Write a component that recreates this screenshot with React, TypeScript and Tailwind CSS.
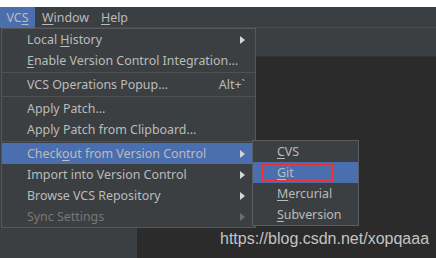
import React from "react";

type Item =
  | { kind: "sep" }
  | {
      kind: "item";
      label: string;
      mnemonic?: number;
      arrow?: boolean;
      shortcut?: string;
      active?: boolean;
      disabled?: boolean;
    };

const vcsItems: Item[] = [
  { kind: "item", label: "Local History", mnemonic: 6, arrow: true },
  { kind: "item", label: "Enable Version Control Integration...", mnemonic: 0 },
  { kind: "sep" },
  { kind: "item", label: "VCS Operations Popup...", shortcut: "Alt+`" },
  { kind: "sep" },
  { kind: "item", label: "Apply Patch..." },
  { kind: "item", label: "Apply Patch from Clipboard..." },
  { kind: "sep" },
  { kind: "item", label: "Checkout from Version Control", mnemonic: 5, arrow: true, active: true },
  { kind: "item", label: "Import into Version Control", arrow: true },
  { kind: "item", label: "Browse VCS Repository", arrow: true },
  { kind: "item", label: "Sync Settings", arrow: true, disabled: true },
];

const checkoutItems = [
  { label: "CVS", mnemonic: 0 },
  { label: "Git", mnemonic: 0, active: true },
  { label: "Mercurial", mnemonic: 0 },
  { label: "Subversion", mnemonic: 0 },
];

function Label({ text, mnemonic }: { text: string; mnemonic?: number }) {
  if (mnemonic === undefined) {
    return <>{text}</>;
  }
  return (
    <>
      {text.slice(0, mnemonic)}
      <span className="underline underline-offset-2">{text[mnemonic]}</span>
      {text.slice(mnemonic + 1)}
    </>
  );
}

function Arrow({ dim }: { dim?: boolean }) {
  return (
    <svg width="5" height="8" viewBox="0 0 5 8" className="shrink-0">
      <path d="M0 0 L5 4 L0 8 Z" fill={dim ? "#6e6e6e" : "#d6d6d6"} />
    </svg>
  );
}

function VcsMenu() {
  return (
    <div className="absolute left-[1px] top-[28px] w-[255px] border border-[#555759] bg-[#3c3f41]">
      {vcsItems.map((item, i) =>
        item.kind === "sep" ? (
          <div key={i} className="flex h-[3px] items-center">
            <div className="h-px w-full bg-[#515151]" />
          </div>
        ) : (
          <div
            key={i}
            className={`flex h-[21px] items-center justify-between whitespace-nowrap pl-[25px] pr-[10px] ${
              item.active ? "bg-[#4b6eaf]" : ""
            } ${item.disabled ? "text-[#787878]" : "text-[#bbbbbb]"}`}
          >
            <span className="pt-[2px]">
              <Label text={item.label} mnemonic={item.mnemonic} />
            </span>
            {item.arrow && <Arrow dim={item.disabled} />}
            {item.shortcut && <span className="pt-[2px]">{item.shortcut}</span>}
          </div>
        )
      )}
    </div>
  );
}

function CheckoutMenu() {
  return (
    <div className="absolute left-[252px] top-[140px] w-[107px] border border-[#5b5e60] bg-[#3c3f41]">
      {checkoutItems.map((item) => (
        <div
          key={item.label}
          className={`relative flex h-[21px] items-center pl-[24px] text-[#bbbbbb] ${
            item.active ? "bg-[#4b6eaf]" : ""
          }`}
        >
          <span className="pt-[2px]">
            <Label text={item.label} mnemonic={item.mnemonic} />
          </span>
          {item.active && (
            <div className="absolute left-[9px] top-[1px] h-[19px] w-[72px] border-2 border-[#f2302f]" />
          )}
        </div>
      ))}
    </div>
  );
}

export default function App() {
  return (
    <div
      className="relative h-[258px] w-[436px] overflow-hidden bg-white text-[12.4px]"
      style={{ fontFamily: '"Noto Sans", "Open Sans", sans-serif' }}
    >
      <div className="h-[7px] bg-white" />
      <div className="flex h-[21px] items-center border-b border-[#4a4d4f] bg-[#3c3f41] pt-[2px] text-[#bbbbbb]">
        <div className="-mt-[2px] flex h-[21px] w-[35px] items-center justify-center bg-[#4b6eaf] pt-[2px]">
          <Label text="VCS" mnemonic={2} />
        </div>
        <div className="ml-[7px]">
          <Label text="Window" mnemonic={0} />
        </div>
        <div className="ml-[12px]">
          <Label text="Help" mnemonic={0} />
        </div>
      </div>
      <div className="flex h-[230px]">
        <div className="w-[137px] bg-[#3c3f41]" />
        <div className="flex flex-1 flex-col">
          <div className="h-[29px] border-b border-[#323232] bg-[#3c3f41]" />
          <div className="relative flex-1 bg-[#2b2b2b]">
            <div
              className="absolute left-[83px] top-[174px] text-[16px] leading-none text-[#c4c4c4]"
              style={{ fontFamily: '"Liberation Sans", Arial, sans-serif' }}
            >
              https://blog.csdn.net/xopqaaa
            </div>
          </div>
        </div>
      </div>
      <VcsMenu />
      <CheckoutMenu />
    </div>
  );
}
